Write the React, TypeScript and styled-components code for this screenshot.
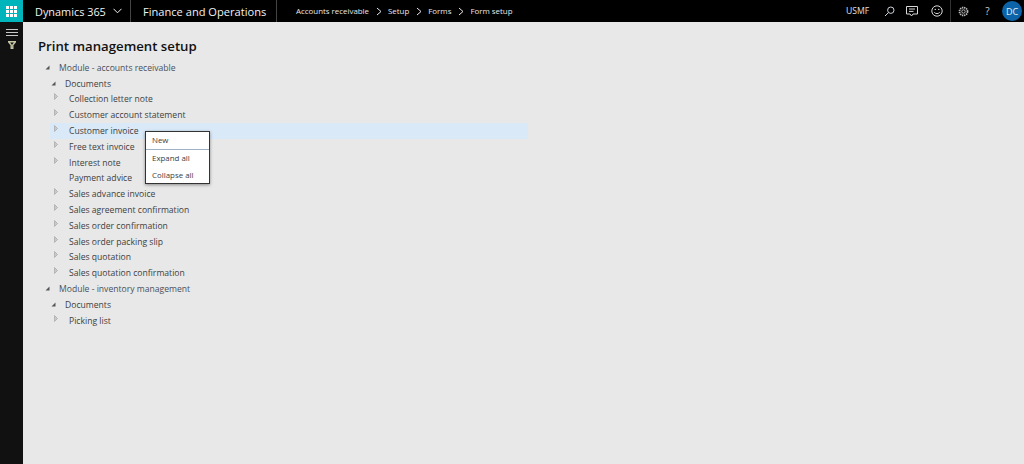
import { Fragment } from "react";
import styled, { createGlobalStyle } from "styled-components";

const GlobalStyle = createGlobalStyle`
  html, body {
    margin: 0;
    padding: 0;
    height: 100%;
    background: #e8e8e8;
    font-family: "Open Sans", "Noto Sans", sans-serif;
  }
  #root {
    height: 100%;
  }
`;

const Page = styled.div`
  width: 1024px;
  height: 464px;
  display: flex;
  flex-direction: column;
  overflow: hidden;
`;

const TopBar = styled.header`
  height: 22px;
  flex: none;
  display: flex;
  align-items: stretch;
  background: #000;
  color: #f2f2f2;
`;

const Waffle = styled.div`
  width: 23px;
  background: #00b4bc;
  display: flex;
  align-items: center;
  justify-content: center;
`;

const BrandCell = styled.div`
  width: 108px;
  display: flex;
  align-items: center;
  gap: 7px;
  padding-left: 12px;
  box-sizing: border-box;
  font-size: 10.9px;
  white-space: nowrap;
  border-right: 1px solid #444;
`;

const AppCell = styled.div`
  width: 146px;
  display: flex;
  align-items: center;
  padding-left: 12px;
  box-sizing: border-box;
  font-size: 11.1px;
  white-space: nowrap;
  border-right: 1px solid #444;
`;

const Crumbs = styled.nav`
  display: flex;
  align-items: center;
  flex: 1;
  padding-left: 19px;
  font-size: 7.9px;
  color: #e8e8e8;
  gap: 6.5px;
`;

const Tools = styled.div`
  display: flex;
  align-items: center;
`;

const Company = styled.span`
  width: 32px;
  font-size: 8.6px;
  color: #e0e0e0;
`;

const ToolIcon = styled.span<{ $w: number }>`
  width: ${(p) => p.$w}px;
  height: 22px;
  display: flex;
  align-items: center;
  justify-content: center;
  color: #d0d0d0;
  font-size: 10px;
`;

const ToolDivider = styled.span`
  width: 1px;
  height: 22px;
  background: #333;
`;

const Avatar = styled.span`
  width: 20px;
  height: 20px;
  margin: 0 2px 0 3px;
  border-radius: 50%;
  background: #0c63a8;
  color: #e6eef6;
  font-size: 9px;
  display: flex;
  align-items: center;
  justify-content: center;
`;

const Body = styled.div`
  flex: 1;
  display: flex;
  min-height: 0;
`;

const Rail = styled.aside`
  width: 23px;
  flex: none;
  background: #111;
  display: flex;
  flex-direction: column;
  align-items: center;
  padding-top: 7px;
  gap: 5px;
  box-sizing: border-box;
`;

const Content = styled.main`
  flex: 1;
  padding: 15px 0 0 15px;
  color: #333;
`;

const Title = styled.h1`
  margin: 0 0 4px;
  height: 19px;
  line-height: 19px;
  font-size: 13.2px;
  font-weight: 600;
  color: #111;
`;

const Tree = styled.ul`
  list-style: none;
  margin: 0;
  padding: 0;
  width: 490px;
`;

const Row = styled.li<{ $level: number; $selected?: boolean }>`
  position: relative;
  height: 15.81px;
  display: flex;
  align-items: center;
  margin-left: ${(p) => (p.$level === 2 ? 12 : 0)}px;
  padding-left: ${(p) => [7, 13, 4][p.$level]}px;
  font-size: 8.6px;
  white-space: nowrap;
  color: ${(p) => (p.$level === 0 ? "#4a5058" : "#404040")};
  background: ${(p) => (p.$selected ? "#d9e9f7" : "transparent")};
`;

const Toggle = styled.span<{ $level: number }>`
  width: ${(p) => (p.$level === 2 ? 15 : 14)}px;
  height: 12px;
  flex: none;
  display: flex;
  align-items: flex-start;
`;

const Menu = styled.div`
  position: absolute;
  left: 95px;
  top: 8px;
  width: 63px;
  height: 51px;
  z-index: 2;
  background: #fff;
  border: 1px solid #333;
  box-shadow: 0 1px 3px rgba(0, 0, 0, 0.4);
  color: #404040;
  font-size: 7.9px;
`;

const MenuItem = styled.div<{ $sep?: boolean }>`
  height: 17px;
  line-height: 17px;
  padding-left: 6px;
  border-bottom: ${(p) => (p.$sep ? "1px solid #9db2c6" : "none")};
`;

const Caret = ({ open }: { open: boolean }) =>
  open ? (
    <svg width="5" height="5" viewBox="0 0 5 5" style={{ marginTop: 3 }}>
      <path d="M4.5 0.5V4.5H0.5Z" fill="#555" />
    </svg>
  ) : (
    <svg width="4" height="7" viewBox="0 0 4 7">
      <path d="M0.5 0.5L3.5 3.5L0.5 6.5Z" fill="#c8c8c8" stroke="#a0a0a0" strokeWidth="0.6" />
    </svg>
  );

const Chevron = () => (
  <svg width="6" height="9" viewBox="0 0 6 9" fill="none" stroke="#e8e8e8" strokeWidth="1">
    <path d="M1 1L5 4.5L1 8" />
  </svg>
);

const rows: { label: string; level: number; open?: boolean; leaf?: boolean; selected?: boolean }[] = [
  { label: "Module - accounts receivable", level: 0, open: true },
  { label: "Documents", level: 1, open: true },
  { label: "Collection letter note", level: 2 },
  { label: "Customer account statement", level: 2 },
  { label: "Customer invoice", level: 2, selected: true },
  { label: "Free text invoice", level: 2 },
  { label: "Interest note", level: 2 },
  { label: "Payment advice", level: 2, leaf: true },
  { label: "Sales advance invoice", level: 2 },
  { label: "Sales agreement confirmation", level: 2 },
  { label: "Sales order confirmation", level: 2 },
  { label: "Sales order packing slip", level: 2 },
  { label: "Sales quotation", level: 2 },
  { label: "Sales quotation confirmation", level: 2 },
  { label: "Module - inventory management", level: 0, open: true },
  { label: "Documents", level: 1, open: true },
  { label: "Picking list", level: 2 },
];

const crumbs = ["Accounts receivable", "Setup", "Forms", "Form setup"];

export default function App() {
  return (
    <Page>
      <GlobalStyle />
      <TopBar>
        <Waffle>
          <svg width="11" height="11" viewBox="0 0 11 11" fill="#fff">
            {[0, 4, 8].map((y) =>
              [0, 4, 8].map((x) => <rect key={`${x}-${y}`} x={x} y={y} width="3" height="3" />)
            )}
          </svg>
        </Waffle>
        <BrandCell>
          Dynamics 365
          <svg width="9" height="6" viewBox="0 0 9 6" fill="none" stroke="#f2f2f2" strokeWidth="1">
            <path d="M0.5 0.8L4.5 4.8L8.5 0.8" />
          </svg>
        </BrandCell>
        <AppCell>Finance and Operations</AppCell>
        <Crumbs>
          {crumbs.map((c, i) => (
            <Fragment key={c}>
              {i > 0 && <Chevron />}
              <span>{c}</span>
            </Fragment>
          ))}
        </Crumbs>
        <Tools>
          <Company>USMF</Company>
          <ToolIcon $w={22}>
            <svg width="11" height="11" viewBox="0 0 11 11" fill="none" stroke="#cfd6dc" strokeWidth="1">
              <circle cx="6.8" cy="4.2" r="3.2" />
              <path d="M4.4 6.6L1 10" />
            </svg>
          </ToolIcon>
          <ToolIcon $w={24}>
            <svg width="12" height="11" viewBox="0 0 12 11" fill="none" stroke="#d8d8d8" strokeWidth="1">
              <path d="M0.5 0.5H11.5V8H7L5.5 10L4 8H0.5Z" />
              <path d="M3 3H9M3 5.4H7.5" />
            </svg>
          </ToolIcon>
          <ToolIcon $w={26}>
            <svg width="12" height="12" viewBox="0 0 12 12" fill="none" stroke="#d8d8d8" strokeWidth="1">
              <circle cx="6" cy="6" r="5.2" />
              <path d="M3.3 7.3C4.3 9 7.7 9 8.7 7.3" />
              <path d="M3.6 4.4H5M7 4.4H8.4" />
            </svg>
          </ToolIcon>
          <ToolDivider />
          <ToolIcon $w={25}>
            <svg width="11" height="11" viewBox="0 0 11 11" fill="none" stroke="#b8b8b8">
              <circle cx="5.5" cy="5.5" r="1.7" strokeWidth="1" />
              <circle cx="5.5" cy="5.5" r="4" strokeWidth="1.8" strokeDasharray="1.4 0.7" />
            </svg>
          </ToolIcon>
          <ToolIcon $w={23}>?</ToolIcon>
          <Avatar>DC</Avatar>
        </Tools>
      </TopBar>
      <Body>
        <Rail>
          <svg width="12" height="7" viewBox="0 0 12 7" stroke="#c8c8c8" strokeWidth="1">
            <path d="M0 0.5H12M0 3.5H12M0 6.5H12" />
          </svg>
          <svg width="8" height="8" viewBox="0 0 8 8" fill="none" stroke="#c8c8a8" strokeWidth="1.4">
            <path d="M0.6 0.8H7.4L4.8 4V7.4H3.2V4Z" />
          </svg>
        </Rail>
        <Content>
          <Title>Print management setup</Title>
          <Tree>
            {rows.map((r, i) => (
              <Row key={i} $level={r.level} $selected={r.selected}>
                <Toggle $level={r.level}>{!r.leaf && <Caret open={!!r.open} />}</Toggle>
                {r.label}
                {r.selected && (
                  <Menu>
                    <MenuItem $sep>New</MenuItem>
                    <MenuItem>Expand all</MenuItem>
                    <MenuItem>Collapse all</MenuItem>
                  </Menu>
                )}
              </Row>
            ))}
          </Tree>
        </Content>
      </Body>
    </Page>
  );
}
